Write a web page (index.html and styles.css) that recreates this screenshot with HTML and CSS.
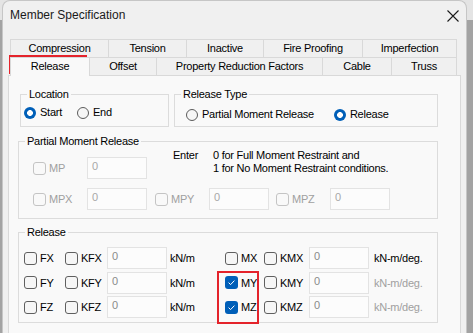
FILE: index.html
```html
<!DOCTYPE html>
<html>
<head>
<meta charset="utf-8">
<link rel="stylesheet" href="styles.css">
</head>
<body>
<div class="window">
  <div class="titlebar">
    <span class="title">Member Specification</span>
    <svg class="close" width="12" height="12" viewBox="0 0 12 12"><path d="M0.5 0.5 L11.5 11.5 M11.5 0.5 L0.5 11.5" stroke="#1b1b1b" stroke-width="1.1" fill="none"/></svg>
  </div>
  <div class="tabs">
    <div class="tabrow">
      <div class="tab w99">Compression</div>
      <div class="tab w78">Tension</div>
      <div class="tab w77">Inactive</div>
      <div class="tab w99">Fire Proofing</div>
      <div class="tab w94">Imperfection</div>
    </div>
    <div class="tabrow">
      <div class="tab sel w80">Release</div>
      <div class="tab w67">Offset</div>
      <div class="tab w166">Property Reduction Factors</div>
      <div class="tab w69">Cable</div>
      <div class="tab w65">Truss</div>
    </div>
  </div>
  <div class="panel">
    <div class="toprow">
      <fieldset class="grp loc">
        <legend>Location</legend>
        <div class="opts">
          <span class="opt"><span class="radio on"></span>Start</span>
          <span class="opt end"><span class="radio"></span>End</span>
        </div>
      </fieldset>
      <fieldset class="grp rtype">
        <legend>Release Type</legend>
        <div class="opts">
          <span class="opt"><span class="radio"></span>Partial Moment Release</span>
          <span class="opt rel"><span class="radio on"></span>Release</span>
        </div>
      </fieldset>
    </div>

    <fieldset class="grp partial">
      <legend>Partial Moment Release</legend>
      <div class="prow first">
        <span class="cell dis"><span class="cb dis"></span>MP</span>
        <span class="tb dis">0</span>
        <span class="enter">Enter</span>
        <span class="note">0 for Full Moment Restraint and<br>1 for No Moment Restraint conditions.</span>
      </div>
      <div class="prow second">
        <span class="cell dis"><span class="cb dis"></span>MPX</span>
        <span class="tb dis">0</span>
        <span class="cell dis mid"><span class="cb dis"></span>MPY</span>
        <span class="tb dis">0</span>
        <span class="cell dis last"><span class="cb dis"></span>MPZ</span>
        <span class="tb dis">0</span>
      </div>
    </fieldset>

    <fieldset class="grp release">
      <legend>Release</legend>
      <div class="rgrid">
        <span class="cell"><span class="cb"></span>FX</span>
        <span class="cell"><span class="cb"></span>KFX</span>
        <span class="tb">0</span>
        <span class="unit">kN/m</span>
        <span class="cell"><span class="cb"></span>MX</span>
        <span class="cell"><span class="cb"></span>KMX</span>
        <span class="tb">0</span>
        <span class="unit">kN-m/deg.</span>

        <span class="cell"><span class="cb"></span>FY</span>
        <span class="cell"><span class="cb"></span>KFY</span>
        <span class="tb">0</span>
        <span class="unit">kN/m</span>
        <span class="cell"><span class="cb on"><svg width="13" height="13" viewBox="0 0 13 13"><path d="M3.6 6.6 L5.6 8.6 L9.4 4.6" stroke="#fff" stroke-width="1" fill="none"/></svg></span>MY</span>
        <span class="cell"><span class="cb"></span>KMY</span>
        <span class="tb">0</span>
        <span class="unit dis">kN-m/deg.</span>

        <span class="cell"><span class="cb"></span>FZ</span>
        <span class="cell"><span class="cb"></span>KFZ</span>
        <span class="tb">0</span>
        <span class="unit">kN/m</span>
        <span class="cell"><span class="cb on"><svg width="13" height="13" viewBox="0 0 13 13"><path d="M3.6 6.6 L5.6 8.6 L9.4 4.6" stroke="#fff" stroke-width="1" fill="none"/></svg></span>MZ</span>
        <span class="cell"><span class="cb"></span>KMZ</span>
        <span class="tb">0</span>
        <span class="unit dis">kN-m/deg.</span>
      </div>
    </fieldset>
  </div>
</div>
<div class="mark mark-tab"></div>
<div class="mark mark-m"></div>
</body>
</html>
```

FILE: styles.css
```css
* { box-sizing: border-box; }

body {
  margin: 0;
  width: 473px;
  height: 333px;
  overflow: hidden;
  position: relative;
  background: linear-gradient(#e4e4e4 0 20px, #a3a3a3 20px);
  font-family: "Liberation Sans", Arial, sans-serif;
  font-size: 11px;
  letter-spacing: -0.25px;
  color: #000;
}

.window {
  margin-left: 2px;
  width: 465px;
  height: 333px;
  overflow: hidden;
  background: #f0f0f0;
  border: 1px solid #c6c6c6;
  border-bottom: none;
  border-radius: 8px 8px 0 0;
}

.titlebar {
  height: 38px;
  display: flex;
  justify-content: space-between;
  align-items: flex-start;
  padding: 6px 7px 0 7px;
}

.title {
  font-size: 12px;
  line-height: 16px;
  letter-spacing: 0;
  color: #1a1a1a;
}

.close { margin-top: 3px; }

.tabs {
  margin-left: 7px;
  width: 447px;
}

.tabrow {
  display: flex;
  height: 18px;
}

.tab {
  height: 18px;
  border: 1px solid #d9d9d9;
  border-left: none;
  border-bottom: none;
  background: #f0f0f0;
  text-align: center;
  line-height: 17px;
  white-space: nowrap;
}
.tab:first-child { border-left: 1px solid #d9d9d9; }
.tab.sel {
  background: #f9f9f9;
  height: 19px;
  position: relative;
  z-index: 1;
}

.w99 { width: 99px; } .w78 { width: 78px; } .w77 { width: 77px; } .w94 { width: 94px; }
.w80 { width: 80px; } .w67 { width: 67px; } .w166 { width: 166px; } .w69 { width: 69px; } .w65 { width: 65px; }

.panel {
  margin-left: 5px;
  width: 453px;
  height: 258px;
  background: #f9f9f9;
  border: 1px solid #d9d9d9;
  border-bottom: none;
  padding: 0 0 0 9px;
}

.grp {
  margin: 0;
  padding: 0;
  min-width: 0;
  border: 1px solid #dcdcdc;
}
.grp legend {
  padding: 0 2px;
  margin-left: 6px;
  line-height: 13px;
}

.toprow {
  display: flex;
  gap: 5px;
  margin-top: 12px;
  padding-left: 2px;
}

.loc { width: 149px; padding: 5px 0 7px 0; }
.loc .opts { padding-left: 3px; }
.rtype { width: 264px; padding: 7px 0 5px 0; }
.rtype .opts { padding-left: 11px; }

.opts { display: flex; align-items: center; height: 13px; }
.opt { display: flex; align-items: center; gap: 4px; line-height: 13px; }
.opt.end { margin-left: 15px; }
.opt.rel { margin-left: 20px; }

.radio {
  width: 12px;
  height: 12px;
  border-radius: 50%;
  border: 1px solid #5b5b5b;
  background: #f6f6f6;
  flex: none;
}
.radio.on {
  border: none;
  background: radial-gradient(circle, #fff 0 2.6px, #005fb8 3.2px);
}

.partial {
  width: 420px;
  margin-top: 8px;
  padding: 1px 0 8px 0;
}

.prow { display: flex; padding-left: 14px; }
.prow.first { align-items: flex-start; }
.prow.first .cell, .prow.first .tb { margin-top: 8px; }
.prow.second { align-items: center; margin-top: 9px; }

.cell {
  display: flex;
  align-items: center;
  gap: 3px;
  height: 22px;
  white-space: nowrap;
}
.prow .cell { width: 54px; }
.prow .cell.mid { margin-left: 8px; }
.prow .cell.last { margin-left: 7px; }

.dis { color: #a0a0a0; }

.cb {
  width: 13px;
  height: 13px;
  border-radius: 3px;
  border: 1px solid #5f5f5f;
  background: #f6f6f6;
  flex: none;
  display: block;
}
.cb.dis { border-color: #c4c4c4; background: #f9f9f9; }
.cb.on { border: none; background: #005fb8; }
.cb svg { display: block; }

.tb {
  width: 60px;
  height: 22px;
  border: 1px solid #e3e3e3;
  background: #fcfcfc;
  color: #8a8a8a;
  padding: 2px 0 0 4px;
  line-height: 13px;
  flex: none;
}
.tb.dis { color: #a8a8a8; }

.enter {
  width: 40px;
  margin-left: 26px;
  line-height: 13px;
}
.note { line-height: 13px; white-space: nowrap; }

.release {
  width: 420px;
  margin-top: 7px;
  padding: 8px 0 4px 0;
}

.rgrid {
  display: grid;
  grid-template-columns: 41px 42px 63px 55px 39px 45px 65px auto;
  grid-auto-rows: 22px;
  row-gap: 2.5px;
  align-items: center;
  padding-left: 5px;
}
.unit { white-space: nowrap; }
.unit.dis { color: #a0a0a0; }

.mark {
  position: absolute;
  border: 2px solid #e4232b;
}
.mark-tab { left: 9px; top: 55px; width: 78px; height: 19px; }
.mark-m { left: 217px; top: 271px; width: 42px; height: 53px; }
```
